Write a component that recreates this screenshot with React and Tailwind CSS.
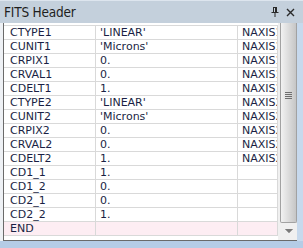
import React from "react";

const rows = [
  ["CTYPE1", "'LINEAR'", "NAXIS1"],
  ["CUNIT1", "'Microns'", "NAXIS1"],
  ["CRPIX1", "0.", "NAXIS1"],
  ["CRVAL1", "0.", "NAXIS1"],
  ["CDELT1", "1.", "NAXIS1"],
  ["CTYPE2", "'LINEAR'", "NAXIS2"],
  ["CUNIT2", "'Microns'", "NAXIS2"],
  ["CRPIX2", "0.", "NAXIS2"],
  ["CRVAL2", "0.", "NAXIS2"],
  ["CDELT2", "1.", "NAXIS2"],
  ["CD1_1", "1.", ""],
  ["CD1_2", "0.", ""],
  ["CD2_1", "0.", ""],
  ["CD2_2", "1.", ""],
];

function Row({ cells, end }) {
  return (
    <div
      className={`flex h-[14px] border-b border-[#d9d9d9] leading-[13px] ${
        end ? "bg-[#fdedf3]" : "bg-white"
      }`}
    >
      <div className="w-[92px] shrink-0 border-r border-[#d9d9d9] pl-[6px] overflow-hidden whitespace-nowrap">
        {cells[0]}
      </div>
      <div className="w-[142px] shrink-0 border-r border-[#d9d9d9] pl-[4px] overflow-hidden whitespace-nowrap">
        {cells[1]}
      </div>
      <div className="w-[40px] shrink-0 border-r border-[#d9d9d9] pl-[4px] overflow-hidden whitespace-nowrap">
        {cells[2]}
      </div>
    </div>
  );
}

function FitsHeader() {
  return (
    <div className="w-[303px] h-[248px] bg-[#c7d9ed] flex flex-col overflow-hidden font-['DejaVu_Sans',sans-serif]">
      <div className="h-[23px] shrink-0 bg-[#c4d0dc] border-t border-[#dde5ee] flex items-center pl-[4px] pr-[8px] text-[#1e1e1e]">
        <span className="text-[13.5px] font-['DejaVu_Sans_Condensed','DejaVu_Sans',sans-serif] tracking-[-0.2px]">
          FITS Header
        </span>
        <div className="ml-auto flex items-center gap-[7px]">
          <svg width="8" height="10" viewBox="0 0 8 10">
            <path d="M2 0.5h4M2.5 0.5v5M5.5 0.5v5M0.5 5.5h7M4 5.5v4.5" stroke="#2a2a2a" strokeWidth="1" fill="none" />
            <path d="M4.5 1v4.5" stroke="#2a2a2a" strokeWidth="1" />
          </svg>
          <svg width="9" height="9" viewBox="0 0 9 9">
            <path d="M1 1l7 7M8 1l-7 7" stroke="#2a2a2a" strokeWidth="1.4" fill="none" />
          </svg>
        </div>
      </div>
      <div className="flex flex-1 min-h-0">
        <div className="w-[3px] bg-[#eef1f5] shrink-0" />
        <div className="w-[294px] h-[218px] shrink-0 border-l border-[#6a6a6a] border-b bg-white flex">
          <div className="w-[274px] pt-[2px] text-[11px] text-[#1a1f44]">
            <div className="border-t border-[#d9d9d9]">
              {rows.map((r) => (
                <Row key={r[0]} cells={r} />
              ))}
              <Row cells={["END", "", ""]} end />
            </div>
          </div>
          <div className="w-[19px] ml-auto bg-[#f0f0f0] flex flex-col pl-[2px]">
            <div className="h-[200px] rounded-b-[2px] border border-t-0 border-[#a2a2a2] bg-gradient-to-r from-[#f2f2f2] via-[#dcdcdc] to-[#c6c6c6] flex flex-col items-center">
              <div className="mt-[69px] flex flex-col gap-[1px]">
                <div className="w-[7px] h-[1px] bg-[#6f6f6f]" />
                <div className="w-[7px] h-[1px] bg-[#6f6f6f]" />
                <div className="w-[7px] h-[1px] bg-[#6f6f6f]" />
                <div className="w-[7px] h-[1px] bg-[#6f6f6f]" />
              </div>
            </div>
            <div className="flex-1 flex items-center justify-center">
              <svg width="8" height="5" viewBox="0 0 8 5">
                <path d="M0 0h8M1 1h6M2 2h4M3 3h2" stroke="#555" strokeWidth="1" />
              </svg>
            </div>
          </div>
        </div>
      </div>
      <div className="h-[7px] shrink-0 bg-[#b5cce6]" />
    </div>
  );
}

export default function App() {
  return <FitsHeader />;
}
